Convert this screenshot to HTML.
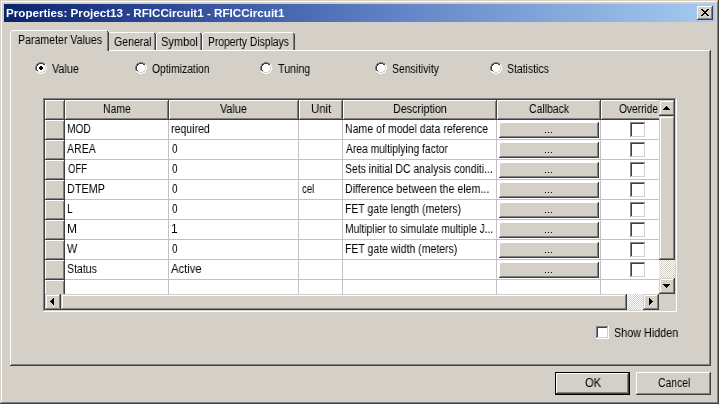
<!DOCTYPE html>
<html><head><meta charset="utf-8"><style>
html,body{margin:0;padding:0;width:719px;height:404px;overflow:hidden;background:#d4d0c8}
body>div,#hdr>div,#gb>div{position:absolute}
.t{position:absolute;font-family:"Liberation Sans",sans-serif;line-height:20px;white-space:nowrap;transform-origin:0 0;will-change:transform}
</style></head><body>
<div style="left:0px;top:0px;width:719px;height:404px;background:#d4d0c8"></div>
<div style="left:0px;top:0px;width:719px;height:1px;background:#d4d0c8"></div>
<div style="left:0px;top:0px;width:1px;height:404px;background:#d4d0c8"></div>
<div style="left:0px;top:403px;width:719px;height:1px;background:#404040"></div>
<div style="left:718px;top:0px;width:1px;height:404px;background:#404040"></div>
<div style="left:1px;top:1px;width:717px;height:1px;background:#ffffff"></div>
<div style="left:1px;top:1px;width:1px;height:402px;background:#ffffff"></div>
<div style="left:1px;top:402px;width:717px;height:1px;background:#808080"></div>
<div style="left:717px;top:1px;width:1px;height:402px;background:#808080"></div>
<div style="left:4px;top:4px;width:711px;height:18px;background:linear-gradient(to right,#0a246a 0%,#203a8a 13.5%,#4a6bb2 41.6%,#6686c8 57.1%,#88aadc 79.6%,#a6caf0 100%)"></div>
<div class="t" style="left:6.00px;top:3px;font-size:11px;font-weight:bold;transform:scaleX(1.0570);color:#fff">Properties: Project13 - RFICCircuit1 - RFICCircuit1</div>
<div style="left:697px;top:6px;width:16px;height:14px;background:#d4d0c8"></div>
<div style="left:697px;top:6px;width:16px;height:1px;background:#ffffff"></div>
<div style="left:697px;top:6px;width:1px;height:14px;background:#ffffff"></div>
<div style="left:697px;top:19px;width:16px;height:1px;background:#404040"></div>
<div style="left:712px;top:6px;width:1px;height:14px;background:#404040"></div>
<div style="left:698px;top:7px;width:14px;height:1px;background:#d4d0c8"></div>
<div style="left:698px;top:7px;width:1px;height:12px;background:#d4d0c8"></div>
<div style="left:698px;top:18px;width:14px;height:1px;background:#808080"></div>
<div style="left:711px;top:7px;width:1px;height:12px;background:#808080"></div>
<svg style="position:absolute;left:697px;top:6px" width="16" height="14" shape-rendering="crispEdges"><path d="M4 3h2v1h1v1h2v-1h1v-1h2v1h-1v1h-1v1h-1v1h1v1h1v1h1v1h-2v-1h-1v-1h-2v1h-1v1h-2v-1h1v-1h1v-1h1v-1h-1v-1h-1v-1h-1z" fill="#000"/></svg>
<div style="left:10px;top:50px;width:701px;height:316px;background:#d4d0c8"></div>
<div style="left:10px;top:50px;width:700px;height:1px;background:#ffffff"></div>
<div style="left:10px;top:50px;width:1px;height:315px;background:#ffffff"></div>
<div style="left:709px;top:51px;width:1px;height:314px;background:#808080"></div>
<div style="left:11px;top:364px;width:699px;height:1px;background:#808080"></div>
<div style="left:710px;top:50px;width:1px;height:316px;background:#404040"></div>
<div style="left:10px;top:365px;width:701px;height:1px;background:#404040"></div>
<div style="left:107px;top:34px;width:1px;height:16px;background:#ffffff"></div>
<div style="left:108px;top:33px;width:1px;height:1px;background:#ffffff"></div>
<div style="left:109px;top:32px;width:45px;height:1px;background:#ffffff"></div>
<div style="left:154px;top:34px;width:1px;height:16px;background:#808080"></div>
<div style="left:154px;top:33px;width:1px;height:1px;background:#404040"></div>
<div style="left:155px;top:34px;width:1px;height:16px;background:#404040"></div>
<div class="t" style="left:114.00px;top:32px;font-size:12px;transform:scaleX(0.8810);color:#000">General</div>
<div style="left:156px;top:34px;width:1px;height:16px;background:#ffffff"></div>
<div style="left:157px;top:33px;width:1px;height:1px;background:#ffffff"></div>
<div style="left:158px;top:32px;width:42px;height:1px;background:#ffffff"></div>
<div style="left:200px;top:34px;width:1px;height:16px;background:#808080"></div>
<div style="left:200px;top:33px;width:1px;height:1px;background:#404040"></div>
<div style="left:201px;top:34px;width:1px;height:16px;background:#404040"></div>
<div class="t" style="left:161.08px;top:32px;font-size:12px;transform:scaleX(0.9211);color:#000">Symbol</div>
<div style="left:202px;top:34px;width:1px;height:16px;background:#ffffff"></div>
<div style="left:203px;top:33px;width:1px;height:1px;background:#ffffff"></div>
<div style="left:204px;top:32px;width:89px;height:1px;background:#ffffff"></div>
<div style="left:293px;top:34px;width:1px;height:16px;background:#808080"></div>
<div style="left:293px;top:33px;width:1px;height:1px;background:#404040"></div>
<div style="left:294px;top:34px;width:1px;height:16px;background:#404040"></div>
<div class="t" style="left:208.14px;top:32px;font-size:12px;transform:scaleX(0.8602);color:#000">Property Displays</div>
<div style="left:11px;top:31px;width:96px;height:21px;background:#d4d0c8"></div>
<div style="left:10px;top:32px;width:1px;height:19px;background:#ffffff"></div>
<div style="left:11px;top:31px;width:1px;height:1px;background:#ffffff"></div>
<div style="left:12px;top:30px;width:95px;height:1px;background:#ffffff"></div>
<div style="left:107px;top:32px;width:1px;height:19px;background:#808080"></div>
<div style="left:107px;top:31px;width:1px;height:1px;background:#404040"></div>
<div style="left:108px;top:32px;width:1px;height:19px;background:#404040"></div>
<div class="t" style="left:18.12px;top:30px;font-size:12px;transform:scaleX(0.8830);color:#000">Parameter Values</div>
<svg style="position:absolute;left:35px;top:62px" width="12" height="12" shape-rendering="crispEdges"><rect x="4" y="0" width="4" height="1" fill="#808080"/><rect x="2" y="1" width="2" height="1" fill="#808080"/><rect x="4" y="1" width="4" height="1" fill="#404040"/><rect x="8" y="1" width="2" height="1" fill="#808080"/><rect x="1" y="2" width="1" height="1" fill="#808080"/><rect x="2" y="2" width="2" height="1" fill="#404040"/><rect x="4" y="2" width="4" height="1" fill="#ffffff"/><rect x="8" y="2" width="2" height="1" fill="#404040"/><rect x="10" y="2" width="1" height="1" fill="#ffffff"/><rect x="1" y="3" width="1" height="1" fill="#808080"/><rect x="2" y="3" width="1" height="1" fill="#404040"/><rect x="3" y="3" width="6" height="1" fill="#ffffff"/><rect x="9" y="3" width="1" height="1" fill="#d4d0c8"/><rect x="10" y="3" width="1" height="1" fill="#ffffff"/><rect x="0" y="4" width="1" height="1" fill="#808080"/><rect x="1" y="4" width="1" height="1" fill="#404040"/><rect x="2" y="4" width="3" height="1" fill="#ffffff"/><rect x="5" y="4" width="2" height="1" fill="#000"/><rect x="7" y="4" width="3" height="1" fill="#ffffff"/><rect x="10" y="4" width="1" height="1" fill="#d4d0c8"/><rect x="11" y="4" width="1" height="1" fill="#ffffff"/><rect x="0" y="5" width="1" height="1" fill="#808080"/><rect x="1" y="5" width="1" height="1" fill="#404040"/><rect x="2" y="5" width="2" height="1" fill="#ffffff"/><rect x="4" y="5" width="4" height="1" fill="#000"/><rect x="8" y="5" width="2" height="1" fill="#ffffff"/><rect x="10" y="5" width="1" height="1" fill="#d4d0c8"/><rect x="11" y="5" width="1" height="1" fill="#ffffff"/><rect x="0" y="6" width="1" height="1" fill="#808080"/><rect x="1" y="6" width="1" height="1" fill="#404040"/><rect x="2" y="6" width="2" height="1" fill="#ffffff"/><rect x="4" y="6" width="4" height="1" fill="#000"/><rect x="8" y="6" width="2" height="1" fill="#ffffff"/><rect x="10" y="6" width="1" height="1" fill="#d4d0c8"/><rect x="11" y="6" width="1" height="1" fill="#ffffff"/><rect x="0" y="7" width="1" height="1" fill="#808080"/><rect x="1" y="7" width="1" height="1" fill="#404040"/><rect x="2" y="7" width="3" height="1" fill="#ffffff"/><rect x="5" y="7" width="2" height="1" fill="#000"/><rect x="7" y="7" width="3" height="1" fill="#ffffff"/><rect x="10" y="7" width="1" height="1" fill="#d4d0c8"/><rect x="11" y="7" width="1" height="1" fill="#ffffff"/><rect x="1" y="8" width="1" height="1" fill="#808080"/><rect x="2" y="8" width="1" height="1" fill="#404040"/><rect x="3" y="8" width="6" height="1" fill="#ffffff"/><rect x="9" y="8" width="1" height="1" fill="#d4d0c8"/><rect x="10" y="8" width="1" height="1" fill="#ffffff"/><rect x="1" y="9" width="1" height="1" fill="#ffffff"/><rect x="2" y="9" width="2" height="1" fill="#d4d0c8"/><rect x="4" y="9" width="4" height="1" fill="#ffffff"/><rect x="8" y="9" width="2" height="1" fill="#d4d0c8"/><rect x="10" y="9" width="1" height="1" fill="#ffffff"/><rect x="2" y="10" width="2" height="1" fill="#ffffff"/><rect x="4" y="10" width="4" height="1" fill="#d4d0c8"/><rect x="8" y="10" width="2" height="1" fill="#ffffff"/><rect x="4" y="11" width="4" height="1" fill="#ffffff"/></svg>
<div class="t" style="left:52.00px;top:59px;font-size:12px;transform:scaleX(0.9000);color:#000">Value</div>
<svg style="position:absolute;left:135px;top:62px" width="12" height="12" shape-rendering="crispEdges"><rect x="4" y="0" width="4" height="1" fill="#808080"/><rect x="2" y="1" width="2" height="1" fill="#808080"/><rect x="4" y="1" width="4" height="1" fill="#404040"/><rect x="8" y="1" width="2" height="1" fill="#808080"/><rect x="1" y="2" width="1" height="1" fill="#808080"/><rect x="2" y="2" width="2" height="1" fill="#404040"/><rect x="4" y="2" width="4" height="1" fill="#ffffff"/><rect x="8" y="2" width="2" height="1" fill="#404040"/><rect x="10" y="2" width="1" height="1" fill="#ffffff"/><rect x="1" y="3" width="1" height="1" fill="#808080"/><rect x="2" y="3" width="1" height="1" fill="#404040"/><rect x="3" y="3" width="6" height="1" fill="#ffffff"/><rect x="9" y="3" width="1" height="1" fill="#d4d0c8"/><rect x="10" y="3" width="1" height="1" fill="#ffffff"/><rect x="0" y="4" width="1" height="1" fill="#808080"/><rect x="1" y="4" width="1" height="1" fill="#404040"/><rect x="2" y="4" width="8" height="1" fill="#ffffff"/><rect x="10" y="4" width="1" height="1" fill="#d4d0c8"/><rect x="11" y="4" width="1" height="1" fill="#ffffff"/><rect x="0" y="5" width="1" height="1" fill="#808080"/><rect x="1" y="5" width="1" height="1" fill="#404040"/><rect x="2" y="5" width="8" height="1" fill="#ffffff"/><rect x="10" y="5" width="1" height="1" fill="#d4d0c8"/><rect x="11" y="5" width="1" height="1" fill="#ffffff"/><rect x="0" y="6" width="1" height="1" fill="#808080"/><rect x="1" y="6" width="1" height="1" fill="#404040"/><rect x="2" y="6" width="8" height="1" fill="#ffffff"/><rect x="10" y="6" width="1" height="1" fill="#d4d0c8"/><rect x="11" y="6" width="1" height="1" fill="#ffffff"/><rect x="0" y="7" width="1" height="1" fill="#808080"/><rect x="1" y="7" width="1" height="1" fill="#404040"/><rect x="2" y="7" width="8" height="1" fill="#ffffff"/><rect x="10" y="7" width="1" height="1" fill="#d4d0c8"/><rect x="11" y="7" width="1" height="1" fill="#ffffff"/><rect x="1" y="8" width="1" height="1" fill="#808080"/><rect x="2" y="8" width="1" height="1" fill="#404040"/><rect x="3" y="8" width="6" height="1" fill="#ffffff"/><rect x="9" y="8" width="1" height="1" fill="#d4d0c8"/><rect x="10" y="8" width="1" height="1" fill="#ffffff"/><rect x="1" y="9" width="1" height="1" fill="#ffffff"/><rect x="2" y="9" width="2" height="1" fill="#d4d0c8"/><rect x="4" y="9" width="4" height="1" fill="#ffffff"/><rect x="8" y="9" width="2" height="1" fill="#d4d0c8"/><rect x="10" y="9" width="1" height="1" fill="#ffffff"/><rect x="2" y="10" width="2" height="1" fill="#ffffff"/><rect x="4" y="10" width="4" height="1" fill="#d4d0c8"/><rect x="8" y="10" width="2" height="1" fill="#ffffff"/><rect x="4" y="11" width="4" height="1" fill="#ffffff"/></svg>
<div class="t" style="left:152.00px;top:59px;font-size:12px;transform:scaleX(0.8636);color:#000">Optimization</div>
<svg style="position:absolute;left:260px;top:62px" width="12" height="12" shape-rendering="crispEdges"><rect x="4" y="0" width="4" height="1" fill="#808080"/><rect x="2" y="1" width="2" height="1" fill="#808080"/><rect x="4" y="1" width="4" height="1" fill="#404040"/><rect x="8" y="1" width="2" height="1" fill="#808080"/><rect x="1" y="2" width="1" height="1" fill="#808080"/><rect x="2" y="2" width="2" height="1" fill="#404040"/><rect x="4" y="2" width="4" height="1" fill="#ffffff"/><rect x="8" y="2" width="2" height="1" fill="#404040"/><rect x="10" y="2" width="1" height="1" fill="#ffffff"/><rect x="1" y="3" width="1" height="1" fill="#808080"/><rect x="2" y="3" width="1" height="1" fill="#404040"/><rect x="3" y="3" width="6" height="1" fill="#ffffff"/><rect x="9" y="3" width="1" height="1" fill="#d4d0c8"/><rect x="10" y="3" width="1" height="1" fill="#ffffff"/><rect x="0" y="4" width="1" height="1" fill="#808080"/><rect x="1" y="4" width="1" height="1" fill="#404040"/><rect x="2" y="4" width="8" height="1" fill="#ffffff"/><rect x="10" y="4" width="1" height="1" fill="#d4d0c8"/><rect x="11" y="4" width="1" height="1" fill="#ffffff"/><rect x="0" y="5" width="1" height="1" fill="#808080"/><rect x="1" y="5" width="1" height="1" fill="#404040"/><rect x="2" y="5" width="8" height="1" fill="#ffffff"/><rect x="10" y="5" width="1" height="1" fill="#d4d0c8"/><rect x="11" y="5" width="1" height="1" fill="#ffffff"/><rect x="0" y="6" width="1" height="1" fill="#808080"/><rect x="1" y="6" width="1" height="1" fill="#404040"/><rect x="2" y="6" width="8" height="1" fill="#ffffff"/><rect x="10" y="6" width="1" height="1" fill="#d4d0c8"/><rect x="11" y="6" width="1" height="1" fill="#ffffff"/><rect x="0" y="7" width="1" height="1" fill="#808080"/><rect x="1" y="7" width="1" height="1" fill="#404040"/><rect x="2" y="7" width="8" height="1" fill="#ffffff"/><rect x="10" y="7" width="1" height="1" fill="#d4d0c8"/><rect x="11" y="7" width="1" height="1" fill="#ffffff"/><rect x="1" y="8" width="1" height="1" fill="#808080"/><rect x="2" y="8" width="1" height="1" fill="#404040"/><rect x="3" y="8" width="6" height="1" fill="#ffffff"/><rect x="9" y="8" width="1" height="1" fill="#d4d0c8"/><rect x="10" y="8" width="1" height="1" fill="#ffffff"/><rect x="1" y="9" width="1" height="1" fill="#ffffff"/><rect x="2" y="9" width="2" height="1" fill="#d4d0c8"/><rect x="4" y="9" width="4" height="1" fill="#ffffff"/><rect x="8" y="9" width="2" height="1" fill="#d4d0c8"/><rect x="10" y="9" width="1" height="1" fill="#ffffff"/><rect x="2" y="10" width="2" height="1" fill="#ffffff"/><rect x="4" y="10" width="4" height="1" fill="#d4d0c8"/><rect x="8" y="10" width="2" height="1" fill="#ffffff"/><rect x="4" y="11" width="4" height="1" fill="#ffffff"/></svg>
<div class="t" style="left:278.00px;top:59px;font-size:12px;transform:scaleX(0.8889);color:#000">Tuning</div>
<svg style="position:absolute;left:375px;top:62px" width="12" height="12" shape-rendering="crispEdges"><rect x="4" y="0" width="4" height="1" fill="#808080"/><rect x="2" y="1" width="2" height="1" fill="#808080"/><rect x="4" y="1" width="4" height="1" fill="#404040"/><rect x="8" y="1" width="2" height="1" fill="#808080"/><rect x="1" y="2" width="1" height="1" fill="#808080"/><rect x="2" y="2" width="2" height="1" fill="#404040"/><rect x="4" y="2" width="4" height="1" fill="#ffffff"/><rect x="8" y="2" width="2" height="1" fill="#404040"/><rect x="10" y="2" width="1" height="1" fill="#ffffff"/><rect x="1" y="3" width="1" height="1" fill="#808080"/><rect x="2" y="3" width="1" height="1" fill="#404040"/><rect x="3" y="3" width="6" height="1" fill="#ffffff"/><rect x="9" y="3" width="1" height="1" fill="#d4d0c8"/><rect x="10" y="3" width="1" height="1" fill="#ffffff"/><rect x="0" y="4" width="1" height="1" fill="#808080"/><rect x="1" y="4" width="1" height="1" fill="#404040"/><rect x="2" y="4" width="8" height="1" fill="#ffffff"/><rect x="10" y="4" width="1" height="1" fill="#d4d0c8"/><rect x="11" y="4" width="1" height="1" fill="#ffffff"/><rect x="0" y="5" width="1" height="1" fill="#808080"/><rect x="1" y="5" width="1" height="1" fill="#404040"/><rect x="2" y="5" width="8" height="1" fill="#ffffff"/><rect x="10" y="5" width="1" height="1" fill="#d4d0c8"/><rect x="11" y="5" width="1" height="1" fill="#ffffff"/><rect x="0" y="6" width="1" height="1" fill="#808080"/><rect x="1" y="6" width="1" height="1" fill="#404040"/><rect x="2" y="6" width="8" height="1" fill="#ffffff"/><rect x="10" y="6" width="1" height="1" fill="#d4d0c8"/><rect x="11" y="6" width="1" height="1" fill="#ffffff"/><rect x="0" y="7" width="1" height="1" fill="#808080"/><rect x="1" y="7" width="1" height="1" fill="#404040"/><rect x="2" y="7" width="8" height="1" fill="#ffffff"/><rect x="10" y="7" width="1" height="1" fill="#d4d0c8"/><rect x="11" y="7" width="1" height="1" fill="#ffffff"/><rect x="1" y="8" width="1" height="1" fill="#808080"/><rect x="2" y="8" width="1" height="1" fill="#404040"/><rect x="3" y="8" width="6" height="1" fill="#ffffff"/><rect x="9" y="8" width="1" height="1" fill="#d4d0c8"/><rect x="10" y="8" width="1" height="1" fill="#ffffff"/><rect x="1" y="9" width="1" height="1" fill="#ffffff"/><rect x="2" y="9" width="2" height="1" fill="#d4d0c8"/><rect x="4" y="9" width="4" height="1" fill="#ffffff"/><rect x="8" y="9" width="2" height="1" fill="#d4d0c8"/><rect x="10" y="9" width="1" height="1" fill="#ffffff"/><rect x="2" y="10" width="2" height="1" fill="#ffffff"/><rect x="4" y="10" width="4" height="1" fill="#d4d0c8"/><rect x="8" y="10" width="2" height="1" fill="#ffffff"/><rect x="4" y="11" width="4" height="1" fill="#ffffff"/></svg>
<div class="t" style="left:392.13px;top:59px;font-size:12px;transform:scaleX(0.8679);color:#000">Sensitivity</div>
<svg style="position:absolute;left:490px;top:62px" width="12" height="12" shape-rendering="crispEdges"><rect x="4" y="0" width="4" height="1" fill="#808080"/><rect x="2" y="1" width="2" height="1" fill="#808080"/><rect x="4" y="1" width="4" height="1" fill="#404040"/><rect x="8" y="1" width="2" height="1" fill="#808080"/><rect x="1" y="2" width="1" height="1" fill="#808080"/><rect x="2" y="2" width="2" height="1" fill="#404040"/><rect x="4" y="2" width="4" height="1" fill="#ffffff"/><rect x="8" y="2" width="2" height="1" fill="#404040"/><rect x="10" y="2" width="1" height="1" fill="#ffffff"/><rect x="1" y="3" width="1" height="1" fill="#808080"/><rect x="2" y="3" width="1" height="1" fill="#404040"/><rect x="3" y="3" width="6" height="1" fill="#ffffff"/><rect x="9" y="3" width="1" height="1" fill="#d4d0c8"/><rect x="10" y="3" width="1" height="1" fill="#ffffff"/><rect x="0" y="4" width="1" height="1" fill="#808080"/><rect x="1" y="4" width="1" height="1" fill="#404040"/><rect x="2" y="4" width="8" height="1" fill="#ffffff"/><rect x="10" y="4" width="1" height="1" fill="#d4d0c8"/><rect x="11" y="4" width="1" height="1" fill="#ffffff"/><rect x="0" y="5" width="1" height="1" fill="#808080"/><rect x="1" y="5" width="1" height="1" fill="#404040"/><rect x="2" y="5" width="8" height="1" fill="#ffffff"/><rect x="10" y="5" width="1" height="1" fill="#d4d0c8"/><rect x="11" y="5" width="1" height="1" fill="#ffffff"/><rect x="0" y="6" width="1" height="1" fill="#808080"/><rect x="1" y="6" width="1" height="1" fill="#404040"/><rect x="2" y="6" width="8" height="1" fill="#ffffff"/><rect x="10" y="6" width="1" height="1" fill="#d4d0c8"/><rect x="11" y="6" width="1" height="1" fill="#ffffff"/><rect x="0" y="7" width="1" height="1" fill="#808080"/><rect x="1" y="7" width="1" height="1" fill="#404040"/><rect x="2" y="7" width="8" height="1" fill="#ffffff"/><rect x="10" y="7" width="1" height="1" fill="#d4d0c8"/><rect x="11" y="7" width="1" height="1" fill="#ffffff"/><rect x="1" y="8" width="1" height="1" fill="#808080"/><rect x="2" y="8" width="1" height="1" fill="#404040"/><rect x="3" y="8" width="6" height="1" fill="#ffffff"/><rect x="9" y="8" width="1" height="1" fill="#d4d0c8"/><rect x="10" y="8" width="1" height="1" fill="#ffffff"/><rect x="1" y="9" width="1" height="1" fill="#ffffff"/><rect x="2" y="9" width="2" height="1" fill="#d4d0c8"/><rect x="4" y="9" width="4" height="1" fill="#ffffff"/><rect x="8" y="9" width="2" height="1" fill="#d4d0c8"/><rect x="10" y="9" width="1" height="1" fill="#ffffff"/><rect x="2" y="10" width="2" height="1" fill="#ffffff"/><rect x="4" y="10" width="4" height="1" fill="#d4d0c8"/><rect x="8" y="10" width="2" height="1" fill="#ffffff"/><rect x="4" y="11" width="4" height="1" fill="#ffffff"/></svg>
<div class="t" style="left:507.13px;top:59px;font-size:12px;transform:scaleX(0.8723);color:#000">Statistics</div>
<div style="left:43px;top:98px;width:634px;height:214px;background:#fff"></div>
<div style="left:43px;top:98px;width:634px;height:1px;background:#808080"></div>
<div style="left:43px;top:98px;width:1px;height:214px;background:#808080"></div>
<div style="left:43px;top:311px;width:634px;height:1px;background:#ffffff"></div>
<div style="left:676px;top:98px;width:1px;height:214px;background:#ffffff"></div>
<div style="left:44px;top:99px;width:632px;height:1px;background:#404040"></div>
<div style="left:44px;top:99px;width:1px;height:212px;background:#404040"></div>
<div style="left:44px;top:310px;width:632px;height:1px;background:#d4d0c8"></div>
<div style="left:675px;top:99px;width:1px;height:212px;background:#d4d0c8"></div>
<div style="left:45px;top:100px;width:20px;height:20px;background:#d4d0c8"></div>
<div style="left:45px;top:100px;width:19px;height:1px;background:#ffffff"></div>
<div style="left:45px;top:100px;width:1px;height:19px;background:#ffffff"></div>
<div style="left:63px;top:101px;width:1px;height:18px;background:#808080"></div>
<div style="left:46px;top:118px;width:18px;height:1px;background:#808080"></div>
<div style="left:64px;top:100px;width:1px;height:20px;background:#404040"></div>
<div style="left:45px;top:119px;width:20px;height:1px;background:#404040"></div>
<div style="left:65px;top:100px;width:104px;height:20px;background:#d4d0c8"></div>
<div style="left:65px;top:100px;width:103px;height:1px;background:#ffffff"></div>
<div style="left:65px;top:100px;width:1px;height:19px;background:#ffffff"></div>
<div style="left:167px;top:101px;width:1px;height:18px;background:#808080"></div>
<div style="left:66px;top:118px;width:102px;height:1px;background:#808080"></div>
<div style="left:168px;top:100px;width:1px;height:20px;background:#404040"></div>
<div style="left:65px;top:119px;width:104px;height:1px;background:#404040"></div>
<div style="left:169px;top:100px;width:130px;height:20px;background:#d4d0c8"></div>
<div style="left:169px;top:100px;width:129px;height:1px;background:#ffffff"></div>
<div style="left:169px;top:100px;width:1px;height:19px;background:#ffffff"></div>
<div style="left:297px;top:101px;width:1px;height:18px;background:#808080"></div>
<div style="left:170px;top:118px;width:128px;height:1px;background:#808080"></div>
<div style="left:298px;top:100px;width:1px;height:20px;background:#404040"></div>
<div style="left:169px;top:119px;width:130px;height:1px;background:#404040"></div>
<div style="left:299px;top:100px;width:44px;height:20px;background:#d4d0c8"></div>
<div style="left:299px;top:100px;width:43px;height:1px;background:#ffffff"></div>
<div style="left:299px;top:100px;width:1px;height:19px;background:#ffffff"></div>
<div style="left:341px;top:101px;width:1px;height:18px;background:#808080"></div>
<div style="left:300px;top:118px;width:42px;height:1px;background:#808080"></div>
<div style="left:342px;top:100px;width:1px;height:20px;background:#404040"></div>
<div style="left:299px;top:119px;width:44px;height:1px;background:#404040"></div>
<div style="left:343px;top:100px;width:154px;height:20px;background:#d4d0c8"></div>
<div style="left:343px;top:100px;width:153px;height:1px;background:#ffffff"></div>
<div style="left:343px;top:100px;width:1px;height:19px;background:#ffffff"></div>
<div style="left:495px;top:101px;width:1px;height:18px;background:#808080"></div>
<div style="left:344px;top:118px;width:152px;height:1px;background:#808080"></div>
<div style="left:496px;top:100px;width:1px;height:20px;background:#404040"></div>
<div style="left:343px;top:119px;width:154px;height:1px;background:#404040"></div>
<div style="left:497px;top:100px;width:104px;height:20px;background:#d4d0c8"></div>
<div style="left:497px;top:100px;width:103px;height:1px;background:#ffffff"></div>
<div style="left:497px;top:100px;width:1px;height:19px;background:#ffffff"></div>
<div style="left:599px;top:101px;width:1px;height:18px;background:#808080"></div>
<div style="left:498px;top:118px;width:102px;height:1px;background:#808080"></div>
<div style="left:600px;top:100px;width:1px;height:20px;background:#404040"></div>
<div style="left:497px;top:119px;width:104px;height:1px;background:#404040"></div>
<div style="left:601px;top:100px;width:74px;height:20px;background:#d4d0c8"></div>
<div style="left:601px;top:100px;width:73px;height:1px;background:#ffffff"></div>
<div style="left:601px;top:100px;width:1px;height:19px;background:#ffffff"></div>
<div style="left:673px;top:101px;width:1px;height:18px;background:#808080"></div>
<div style="left:602px;top:118px;width:72px;height:1px;background:#808080"></div>
<div style="left:674px;top:100px;width:1px;height:20px;background:#404040"></div>
<div style="left:601px;top:119px;width:74px;height:1px;background:#404040"></div>
<div id="hdr" style="left:45px;top:100px;width:614px;height:20px;overflow:hidden">
<div class="t" style="left:58.13px;top:-1px;font-size:12px;transform:scaleX(0.8710);color:#000">Name</div>
<div class="t" style="left:175.00px;top:-1px;font-size:12px;transform:scaleX(0.9000);color:#000">Value</div>
<div class="t" style="left:266.05px;top:-1px;font-size:12px;transform:scaleX(0.9500);color:#000">Unit</div>
<div class="t" style="left:348.10px;top:-1px;font-size:12px;transform:scaleX(0.8966);color:#000">Description</div>
<div class="t" style="left:484.00px;top:-1px;font-size:12px;transform:scaleX(0.8696);color:#000">Callback</div>
<div class="t" style="left:574.00px;top:-1px;font-size:12px;transform:scaleX(0.8478);color:#000">Override</div>
</div>
<div id="gb" style="left:45px;top:120px;width:614px;height:174px;overflow:hidden">
<div style="left:0px;top:0px;width:20px;height:20px;background:#d4d0c8"></div>
<div style="left:0px;top:0px;width:19px;height:1px;background:#ffffff"></div>
<div style="left:0px;top:0px;width:1px;height:19px;background:#ffffff"></div>
<div style="left:18px;top:1px;width:1px;height:18px;background:#808080"></div>
<div style="left:1px;top:18px;width:18px;height:1px;background:#808080"></div>
<div style="left:19px;top:0px;width:1px;height:20px;background:#404040"></div>
<div style="left:0px;top:19px;width:20px;height:1px;background:#404040"></div>
<div style="left:20px;top:19px;width:610px;height:1px;background:#c4c0c8"></div>
<div style="left:123px;top:0px;width:1px;height:20px;background:#c4c0c8"></div>
<div style="left:253px;top:0px;width:1px;height:20px;background:#c4c0c8"></div>
<div style="left:297px;top:0px;width:1px;height:20px;background:#c4c0c8"></div>
<div style="left:451px;top:0px;width:1px;height:20px;background:#c4c0c8"></div>
<div style="left:555px;top:0px;width:1px;height:20px;background:#c4c0c8"></div>
<div style="left:629px;top:0px;width:1px;height:20px;background:#c4c0c8"></div>
<div class="t" style="left:22.15px;top:-1px;font-size:12px;transform:scaleX(0.8519);color:#000">MOD</div>
<div class="t" style="left:126.12px;top:-1px;font-size:12px;transform:scaleX(0.8810);color:#000">required</div>
<div class="t" style="left:300.12px;top:-1px;font-size:12px;transform:scaleX(0.8820);color:#000">Name of model data reference</div>
<div style="left:454px;top:2px;width:100px;height:16px;background:#d4d0c8"></div>
<div style="left:454px;top:2px;width:100px;height:1px;background:#ffffff"></div>
<div style="left:454px;top:2px;width:1px;height:16px;background:#ffffff"></div>
<div style="left:454px;top:17px;width:100px;height:1px;background:#404040"></div>
<div style="left:553px;top:2px;width:1px;height:16px;background:#404040"></div>
<div style="left:455px;top:3px;width:98px;height:1px;background:#d4d0c8"></div>
<div style="left:455px;top:3px;width:1px;height:14px;background:#d4d0c8"></div>
<div style="left:455px;top:16px;width:98px;height:1px;background:#808080"></div>
<div style="left:552px;top:3px;width:1px;height:14px;background:#808080"></div>
<div style="left:500px;top:12px;width:1px;height:1px;background:#000"></div>
<div style="left:503px;top:12px;width:1px;height:1px;background:#000"></div>
<div style="left:506px;top:12px;width:1px;height:1px;background:#000"></div>
<div style="left:585px;top:2px;width:16px;height:16px;background:#ffffff"></div>
<div style="left:585px;top:2px;width:15px;height:1px;background:#808080"></div>
<div style="left:585px;top:2px;width:1px;height:15px;background:#808080"></div>
<div style="left:586px;top:3px;width:13px;height:1px;background:#404040"></div>
<div style="left:586px;top:3px;width:1px;height:13px;background:#404040"></div>
<div style="left:599px;top:3px;width:1px;height:14px;background:#d4d0c8"></div>
<div style="left:586px;top:16px;width:14px;height:1px;background:#d4d0c8"></div>
<div style="left:0px;top:20px;width:20px;height:20px;background:#d4d0c8"></div>
<div style="left:0px;top:20px;width:19px;height:1px;background:#ffffff"></div>
<div style="left:0px;top:20px;width:1px;height:19px;background:#ffffff"></div>
<div style="left:18px;top:21px;width:1px;height:18px;background:#808080"></div>
<div style="left:1px;top:38px;width:18px;height:1px;background:#808080"></div>
<div style="left:19px;top:20px;width:1px;height:20px;background:#404040"></div>
<div style="left:0px;top:39px;width:20px;height:1px;background:#404040"></div>
<div style="left:20px;top:39px;width:610px;height:1px;background:#c4c0c8"></div>
<div style="left:123px;top:20px;width:1px;height:20px;background:#c4c0c8"></div>
<div style="left:253px;top:20px;width:1px;height:20px;background:#c4c0c8"></div>
<div style="left:297px;top:20px;width:1px;height:20px;background:#c4c0c8"></div>
<div style="left:451px;top:20px;width:1px;height:20px;background:#c4c0c8"></div>
<div style="left:555px;top:20px;width:1px;height:20px;background:#c4c0c8"></div>
<div style="left:629px;top:20px;width:1px;height:20px;background:#c4c0c8"></div>
<div class="t" style="left:22.00px;top:19px;font-size:12px;transform:scaleX(0.8788);color:#000">AREA</div>
<div class="t" style="left:127.00px;top:19px;font-size:12px;transform:scaleX(0.8333);color:#000">0</div>
<div class="t" style="left:301.00px;top:19px;font-size:12px;transform:scaleX(0.8571);color:#000">Area multiplying factor</div>
<div style="left:454px;top:22px;width:100px;height:16px;background:#d4d0c8"></div>
<div style="left:454px;top:22px;width:100px;height:1px;background:#ffffff"></div>
<div style="left:454px;top:22px;width:1px;height:16px;background:#ffffff"></div>
<div style="left:454px;top:37px;width:100px;height:1px;background:#404040"></div>
<div style="left:553px;top:22px;width:1px;height:16px;background:#404040"></div>
<div style="left:455px;top:23px;width:98px;height:1px;background:#d4d0c8"></div>
<div style="left:455px;top:23px;width:1px;height:14px;background:#d4d0c8"></div>
<div style="left:455px;top:36px;width:98px;height:1px;background:#808080"></div>
<div style="left:552px;top:23px;width:1px;height:14px;background:#808080"></div>
<div style="left:500px;top:32px;width:1px;height:1px;background:#000"></div>
<div style="left:503px;top:32px;width:1px;height:1px;background:#000"></div>
<div style="left:506px;top:32px;width:1px;height:1px;background:#000"></div>
<div style="left:585px;top:22px;width:16px;height:16px;background:#ffffff"></div>
<div style="left:585px;top:22px;width:15px;height:1px;background:#808080"></div>
<div style="left:585px;top:22px;width:1px;height:15px;background:#808080"></div>
<div style="left:586px;top:23px;width:13px;height:1px;background:#404040"></div>
<div style="left:586px;top:23px;width:1px;height:13px;background:#404040"></div>
<div style="left:599px;top:23px;width:1px;height:14px;background:#d4d0c8"></div>
<div style="left:586px;top:36px;width:14px;height:1px;background:#d4d0c8"></div>
<div style="left:0px;top:40px;width:20px;height:20px;background:#d4d0c8"></div>
<div style="left:0px;top:40px;width:19px;height:1px;background:#ffffff"></div>
<div style="left:0px;top:40px;width:1px;height:19px;background:#ffffff"></div>
<div style="left:18px;top:41px;width:1px;height:18px;background:#808080"></div>
<div style="left:1px;top:58px;width:18px;height:1px;background:#808080"></div>
<div style="left:19px;top:40px;width:1px;height:20px;background:#404040"></div>
<div style="left:0px;top:59px;width:20px;height:1px;background:#404040"></div>
<div style="left:20px;top:59px;width:610px;height:1px;background:#c4c0c8"></div>
<div style="left:123px;top:40px;width:1px;height:20px;background:#c4c0c8"></div>
<div style="left:253px;top:40px;width:1px;height:20px;background:#c4c0c8"></div>
<div style="left:297px;top:40px;width:1px;height:20px;background:#c4c0c8"></div>
<div style="left:451px;top:40px;width:1px;height:20px;background:#c4c0c8"></div>
<div style="left:555px;top:40px;width:1px;height:20px;background:#c4c0c8"></div>
<div style="left:629px;top:40px;width:1px;height:20px;background:#c4c0c8"></div>
<div class="t" style="left:23.00px;top:39px;font-size:12px;transform:scaleX(0.7917);color:#000">OFF</div>
<div class="t" style="left:127.00px;top:39px;font-size:12px;transform:scaleX(0.8333);color:#000">0</div>
<div class="t" style="left:300.13px;top:39px;font-size:12px;transform:scaleX(0.8690);color:#000">Sets initial DC analysis conditi...</div>
<div style="left:454px;top:42px;width:100px;height:16px;background:#d4d0c8"></div>
<div style="left:454px;top:42px;width:100px;height:1px;background:#ffffff"></div>
<div style="left:454px;top:42px;width:1px;height:16px;background:#ffffff"></div>
<div style="left:454px;top:57px;width:100px;height:1px;background:#404040"></div>
<div style="left:553px;top:42px;width:1px;height:16px;background:#404040"></div>
<div style="left:455px;top:43px;width:98px;height:1px;background:#d4d0c8"></div>
<div style="left:455px;top:43px;width:1px;height:14px;background:#d4d0c8"></div>
<div style="left:455px;top:56px;width:98px;height:1px;background:#808080"></div>
<div style="left:552px;top:43px;width:1px;height:14px;background:#808080"></div>
<div style="left:500px;top:52px;width:1px;height:1px;background:#000"></div>
<div style="left:503px;top:52px;width:1px;height:1px;background:#000"></div>
<div style="left:506px;top:52px;width:1px;height:1px;background:#000"></div>
<div style="left:585px;top:42px;width:16px;height:16px;background:#ffffff"></div>
<div style="left:585px;top:42px;width:15px;height:1px;background:#808080"></div>
<div style="left:585px;top:42px;width:1px;height:15px;background:#808080"></div>
<div style="left:586px;top:43px;width:13px;height:1px;background:#404040"></div>
<div style="left:586px;top:43px;width:1px;height:13px;background:#404040"></div>
<div style="left:599px;top:43px;width:1px;height:14px;background:#d4d0c8"></div>
<div style="left:586px;top:56px;width:14px;height:1px;background:#d4d0c8"></div>
<div style="left:0px;top:60px;width:20px;height:20px;background:#d4d0c8"></div>
<div style="left:0px;top:60px;width:19px;height:1px;background:#ffffff"></div>
<div style="left:0px;top:60px;width:1px;height:19px;background:#ffffff"></div>
<div style="left:18px;top:61px;width:1px;height:18px;background:#808080"></div>
<div style="left:1px;top:78px;width:18px;height:1px;background:#808080"></div>
<div style="left:19px;top:60px;width:1px;height:20px;background:#404040"></div>
<div style="left:0px;top:79px;width:20px;height:1px;background:#404040"></div>
<div style="left:20px;top:79px;width:610px;height:1px;background:#c4c0c8"></div>
<div style="left:123px;top:60px;width:1px;height:20px;background:#c4c0c8"></div>
<div style="left:253px;top:60px;width:1px;height:20px;background:#c4c0c8"></div>
<div style="left:297px;top:60px;width:1px;height:20px;background:#c4c0c8"></div>
<div style="left:451px;top:60px;width:1px;height:20px;background:#c4c0c8"></div>
<div style="left:555px;top:60px;width:1px;height:20px;background:#c4c0c8"></div>
<div style="left:629px;top:60px;width:1px;height:20px;background:#c4c0c8"></div>
<div class="t" style="left:22.10px;top:59px;font-size:12px;transform:scaleX(0.9024);color:#000">DTEMP</div>
<div class="t" style="left:127.00px;top:59px;font-size:12px;transform:scaleX(0.8333);color:#000">0</div>
<div class="t" style="left:257.00px;top:59px;font-size:12px;transform:scaleX(0.8000);color:#000">cel</div>
<div class="t" style="left:300.11px;top:59px;font-size:12px;transform:scaleX(0.8882);color:#000">Difference between the elem...</div>
<div style="left:454px;top:62px;width:100px;height:16px;background:#d4d0c8"></div>
<div style="left:454px;top:62px;width:100px;height:1px;background:#ffffff"></div>
<div style="left:454px;top:62px;width:1px;height:16px;background:#ffffff"></div>
<div style="left:454px;top:77px;width:100px;height:1px;background:#404040"></div>
<div style="left:553px;top:62px;width:1px;height:16px;background:#404040"></div>
<div style="left:455px;top:63px;width:98px;height:1px;background:#d4d0c8"></div>
<div style="left:455px;top:63px;width:1px;height:14px;background:#d4d0c8"></div>
<div style="left:455px;top:76px;width:98px;height:1px;background:#808080"></div>
<div style="left:552px;top:63px;width:1px;height:14px;background:#808080"></div>
<div style="left:500px;top:72px;width:1px;height:1px;background:#000"></div>
<div style="left:503px;top:72px;width:1px;height:1px;background:#000"></div>
<div style="left:506px;top:72px;width:1px;height:1px;background:#000"></div>
<div style="left:585px;top:62px;width:16px;height:16px;background:#ffffff"></div>
<div style="left:585px;top:62px;width:15px;height:1px;background:#808080"></div>
<div style="left:585px;top:62px;width:1px;height:15px;background:#808080"></div>
<div style="left:586px;top:63px;width:13px;height:1px;background:#404040"></div>
<div style="left:586px;top:63px;width:1px;height:13px;background:#404040"></div>
<div style="left:599px;top:63px;width:1px;height:14px;background:#d4d0c8"></div>
<div style="left:586px;top:76px;width:14px;height:1px;background:#d4d0c8"></div>
<div style="left:0px;top:80px;width:20px;height:20px;background:#d4d0c8"></div>
<div style="left:0px;top:80px;width:19px;height:1px;background:#ffffff"></div>
<div style="left:0px;top:80px;width:1px;height:19px;background:#ffffff"></div>
<div style="left:18px;top:81px;width:1px;height:18px;background:#808080"></div>
<div style="left:1px;top:98px;width:18px;height:1px;background:#808080"></div>
<div style="left:19px;top:80px;width:1px;height:20px;background:#404040"></div>
<div style="left:0px;top:99px;width:20px;height:1px;background:#404040"></div>
<div style="left:20px;top:99px;width:610px;height:1px;background:#c4c0c8"></div>
<div style="left:123px;top:80px;width:1px;height:20px;background:#c4c0c8"></div>
<div style="left:253px;top:80px;width:1px;height:20px;background:#c4c0c8"></div>
<div style="left:297px;top:80px;width:1px;height:20px;background:#c4c0c8"></div>
<div style="left:451px;top:80px;width:1px;height:20px;background:#c4c0c8"></div>
<div style="left:555px;top:80px;width:1px;height:20px;background:#c4c0c8"></div>
<div style="left:629px;top:80px;width:1px;height:20px;background:#c4c0c8"></div>
<div class="t" style="left:22.17px;top:79px;font-size:12px;transform:scaleX(0.8333);color:#000">L</div>
<div class="t" style="left:127.00px;top:79px;font-size:12px;transform:scaleX(0.8333);color:#000">0</div>
<div class="t" style="left:300.13px;top:79px;font-size:12px;transform:scaleX(0.8712);color:#000">FET gate length (meters)</div>
<div style="left:454px;top:82px;width:100px;height:16px;background:#d4d0c8"></div>
<div style="left:454px;top:82px;width:100px;height:1px;background:#ffffff"></div>
<div style="left:454px;top:82px;width:1px;height:16px;background:#ffffff"></div>
<div style="left:454px;top:97px;width:100px;height:1px;background:#404040"></div>
<div style="left:553px;top:82px;width:1px;height:16px;background:#404040"></div>
<div style="left:455px;top:83px;width:98px;height:1px;background:#d4d0c8"></div>
<div style="left:455px;top:83px;width:1px;height:14px;background:#d4d0c8"></div>
<div style="left:455px;top:96px;width:98px;height:1px;background:#808080"></div>
<div style="left:552px;top:83px;width:1px;height:14px;background:#808080"></div>
<div style="left:500px;top:92px;width:1px;height:1px;background:#000"></div>
<div style="left:503px;top:92px;width:1px;height:1px;background:#000"></div>
<div style="left:506px;top:92px;width:1px;height:1px;background:#000"></div>
<div style="left:585px;top:82px;width:16px;height:16px;background:#ffffff"></div>
<div style="left:585px;top:82px;width:15px;height:1px;background:#808080"></div>
<div style="left:585px;top:82px;width:1px;height:15px;background:#808080"></div>
<div style="left:586px;top:83px;width:13px;height:1px;background:#404040"></div>
<div style="left:586px;top:83px;width:1px;height:13px;background:#404040"></div>
<div style="left:599px;top:83px;width:1px;height:14px;background:#d4d0c8"></div>
<div style="left:586px;top:96px;width:14px;height:1px;background:#d4d0c8"></div>
<div style="left:0px;top:100px;width:20px;height:20px;background:#d4d0c8"></div>
<div style="left:0px;top:100px;width:19px;height:1px;background:#ffffff"></div>
<div style="left:0px;top:100px;width:1px;height:19px;background:#ffffff"></div>
<div style="left:18px;top:101px;width:1px;height:18px;background:#808080"></div>
<div style="left:1px;top:118px;width:18px;height:1px;background:#808080"></div>
<div style="left:19px;top:100px;width:1px;height:20px;background:#404040"></div>
<div style="left:0px;top:119px;width:20px;height:1px;background:#404040"></div>
<div style="left:20px;top:119px;width:610px;height:1px;background:#c4c0c8"></div>
<div style="left:123px;top:100px;width:1px;height:20px;background:#c4c0c8"></div>
<div style="left:253px;top:100px;width:1px;height:20px;background:#c4c0c8"></div>
<div style="left:297px;top:100px;width:1px;height:20px;background:#c4c0c8"></div>
<div style="left:451px;top:100px;width:1px;height:20px;background:#c4c0c8"></div>
<div style="left:555px;top:100px;width:1px;height:20px;background:#c4c0c8"></div>
<div style="left:629px;top:100px;width:1px;height:20px;background:#c4c0c8"></div>
<div class="t" style="left:22.00px;top:99px;font-size:12px;transform:scaleX(1.0000);color:#000">M</div>
<div class="t" style="left:126.00px;top:99px;font-size:12px;transform:scaleX(1.0000);color:#000">1</div>
<div class="t" style="left:300.15px;top:99px;font-size:12px;transform:scaleX(0.8547);color:#000">Multiplier to simulate multiple J...</div>
<div style="left:454px;top:102px;width:100px;height:16px;background:#d4d0c8"></div>
<div style="left:454px;top:102px;width:100px;height:1px;background:#ffffff"></div>
<div style="left:454px;top:102px;width:1px;height:16px;background:#ffffff"></div>
<div style="left:454px;top:117px;width:100px;height:1px;background:#404040"></div>
<div style="left:553px;top:102px;width:1px;height:16px;background:#404040"></div>
<div style="left:455px;top:103px;width:98px;height:1px;background:#d4d0c8"></div>
<div style="left:455px;top:103px;width:1px;height:14px;background:#d4d0c8"></div>
<div style="left:455px;top:116px;width:98px;height:1px;background:#808080"></div>
<div style="left:552px;top:103px;width:1px;height:14px;background:#808080"></div>
<div style="left:500px;top:112px;width:1px;height:1px;background:#000"></div>
<div style="left:503px;top:112px;width:1px;height:1px;background:#000"></div>
<div style="left:506px;top:112px;width:1px;height:1px;background:#000"></div>
<div style="left:585px;top:102px;width:16px;height:16px;background:#ffffff"></div>
<div style="left:585px;top:102px;width:15px;height:1px;background:#808080"></div>
<div style="left:585px;top:102px;width:1px;height:15px;background:#808080"></div>
<div style="left:586px;top:103px;width:13px;height:1px;background:#404040"></div>
<div style="left:586px;top:103px;width:1px;height:13px;background:#404040"></div>
<div style="left:599px;top:103px;width:1px;height:14px;background:#d4d0c8"></div>
<div style="left:586px;top:116px;width:14px;height:1px;background:#d4d0c8"></div>
<div style="left:0px;top:120px;width:20px;height:20px;background:#d4d0c8"></div>
<div style="left:0px;top:120px;width:19px;height:1px;background:#ffffff"></div>
<div style="left:0px;top:120px;width:1px;height:19px;background:#ffffff"></div>
<div style="left:18px;top:121px;width:1px;height:18px;background:#808080"></div>
<div style="left:1px;top:138px;width:18px;height:1px;background:#808080"></div>
<div style="left:19px;top:120px;width:1px;height:20px;background:#404040"></div>
<div style="left:0px;top:139px;width:20px;height:1px;background:#404040"></div>
<div style="left:20px;top:139px;width:610px;height:1px;background:#c4c0c8"></div>
<div style="left:123px;top:120px;width:1px;height:20px;background:#c4c0c8"></div>
<div style="left:253px;top:120px;width:1px;height:20px;background:#c4c0c8"></div>
<div style="left:297px;top:120px;width:1px;height:20px;background:#c4c0c8"></div>
<div style="left:451px;top:120px;width:1px;height:20px;background:#c4c0c8"></div>
<div style="left:555px;top:120px;width:1px;height:20px;background:#c4c0c8"></div>
<div style="left:629px;top:120px;width:1px;height:20px;background:#c4c0c8"></div>
<div class="t" style="left:22.00px;top:119px;font-size:12px;transform:scaleX(0.9091);color:#000">W</div>
<div class="t" style="left:127.00px;top:119px;font-size:12px;transform:scaleX(0.8333);color:#000">0</div>
<div class="t" style="left:300.13px;top:119px;font-size:12px;transform:scaleX(0.8740);color:#000">FET gate width (meters)</div>
<div style="left:454px;top:122px;width:100px;height:16px;background:#d4d0c8"></div>
<div style="left:454px;top:122px;width:100px;height:1px;background:#ffffff"></div>
<div style="left:454px;top:122px;width:1px;height:16px;background:#ffffff"></div>
<div style="left:454px;top:137px;width:100px;height:1px;background:#404040"></div>
<div style="left:553px;top:122px;width:1px;height:16px;background:#404040"></div>
<div style="left:455px;top:123px;width:98px;height:1px;background:#d4d0c8"></div>
<div style="left:455px;top:123px;width:1px;height:14px;background:#d4d0c8"></div>
<div style="left:455px;top:136px;width:98px;height:1px;background:#808080"></div>
<div style="left:552px;top:123px;width:1px;height:14px;background:#808080"></div>
<div style="left:500px;top:132px;width:1px;height:1px;background:#000"></div>
<div style="left:503px;top:132px;width:1px;height:1px;background:#000"></div>
<div style="left:506px;top:132px;width:1px;height:1px;background:#000"></div>
<div style="left:585px;top:122px;width:16px;height:16px;background:#ffffff"></div>
<div style="left:585px;top:122px;width:15px;height:1px;background:#808080"></div>
<div style="left:585px;top:122px;width:1px;height:15px;background:#808080"></div>
<div style="left:586px;top:123px;width:13px;height:1px;background:#404040"></div>
<div style="left:586px;top:123px;width:1px;height:13px;background:#404040"></div>
<div style="left:599px;top:123px;width:1px;height:14px;background:#d4d0c8"></div>
<div style="left:586px;top:136px;width:14px;height:1px;background:#d4d0c8"></div>
<div style="left:0px;top:140px;width:20px;height:20px;background:#d4d0c8"></div>
<div style="left:0px;top:140px;width:19px;height:1px;background:#ffffff"></div>
<div style="left:0px;top:140px;width:1px;height:19px;background:#ffffff"></div>
<div style="left:18px;top:141px;width:1px;height:18px;background:#808080"></div>
<div style="left:1px;top:158px;width:18px;height:1px;background:#808080"></div>
<div style="left:19px;top:140px;width:1px;height:20px;background:#404040"></div>
<div style="left:0px;top:159px;width:20px;height:1px;background:#404040"></div>
<div style="left:20px;top:159px;width:610px;height:1px;background:#c4c0c8"></div>
<div style="left:123px;top:140px;width:1px;height:20px;background:#c4c0c8"></div>
<div style="left:253px;top:140px;width:1px;height:20px;background:#c4c0c8"></div>
<div style="left:297px;top:140px;width:1px;height:20px;background:#c4c0c8"></div>
<div style="left:451px;top:140px;width:1px;height:20px;background:#c4c0c8"></div>
<div style="left:555px;top:140px;width:1px;height:20px;background:#c4c0c8"></div>
<div style="left:629px;top:140px;width:1px;height:20px;background:#c4c0c8"></div>
<div class="t" style="left:22.12px;top:139px;font-size:12px;transform:scaleX(0.8788);color:#000">Status</div>
<div class="t" style="left:126.00px;top:139px;font-size:12px;transform:scaleX(0.9375);color:#000">Active</div>
<div style="left:454px;top:142px;width:100px;height:16px;background:#d4d0c8"></div>
<div style="left:454px;top:142px;width:100px;height:1px;background:#ffffff"></div>
<div style="left:454px;top:142px;width:1px;height:16px;background:#ffffff"></div>
<div style="left:454px;top:157px;width:100px;height:1px;background:#404040"></div>
<div style="left:553px;top:142px;width:1px;height:16px;background:#404040"></div>
<div style="left:455px;top:143px;width:98px;height:1px;background:#d4d0c8"></div>
<div style="left:455px;top:143px;width:1px;height:14px;background:#d4d0c8"></div>
<div style="left:455px;top:156px;width:98px;height:1px;background:#808080"></div>
<div style="left:552px;top:143px;width:1px;height:14px;background:#808080"></div>
<div style="left:500px;top:152px;width:1px;height:1px;background:#000"></div>
<div style="left:503px;top:152px;width:1px;height:1px;background:#000"></div>
<div style="left:506px;top:152px;width:1px;height:1px;background:#000"></div>
<div style="left:585px;top:142px;width:16px;height:16px;background:#ffffff"></div>
<div style="left:585px;top:142px;width:15px;height:1px;background:#808080"></div>
<div style="left:585px;top:142px;width:1px;height:15px;background:#808080"></div>
<div style="left:586px;top:143px;width:13px;height:1px;background:#404040"></div>
<div style="left:586px;top:143px;width:1px;height:13px;background:#404040"></div>
<div style="left:599px;top:143px;width:1px;height:14px;background:#d4d0c8"></div>
<div style="left:586px;top:156px;width:14px;height:1px;background:#d4d0c8"></div>
<div style="left:0px;top:160px;width:20px;height:20px;background:#d4d0c8"></div>
<div style="left:0px;top:160px;width:19px;height:1px;background:#ffffff"></div>
<div style="left:0px;top:160px;width:1px;height:19px;background:#ffffff"></div>
<div style="left:18px;top:161px;width:1px;height:18px;background:#808080"></div>
<div style="left:1px;top:178px;width:18px;height:1px;background:#808080"></div>
<div style="left:19px;top:160px;width:1px;height:20px;background:#404040"></div>
<div style="left:0px;top:179px;width:20px;height:1px;background:#404040"></div>
<div style="left:20px;top:179px;width:610px;height:1px;background:#c4c0c8"></div>
<div style="left:123px;top:160px;width:1px;height:20px;background:#c4c0c8"></div>
<div style="left:253px;top:160px;width:1px;height:20px;background:#c4c0c8"></div>
<div style="left:297px;top:160px;width:1px;height:20px;background:#c4c0c8"></div>
<div style="left:451px;top:160px;width:1px;height:20px;background:#c4c0c8"></div>
<div style="left:555px;top:160px;width:1px;height:20px;background:#c4c0c8"></div>
<div style="left:629px;top:160px;width:1px;height:20px;background:#c4c0c8"></div>
</div>
<div style="left:659px;top:100px;width:16px;height:194px;background:repeating-conic-gradient(#d4d0c8 0 25%,#fff 0 50%) 0 0/2px 2px"></div>
<div style="left:659px;top:100px;width:16px;height:16px;background:#d4d0c8"></div>
<div style="left:659px;top:100px;width:16px;height:1px;background:#d4d0c8"></div>
<div style="left:659px;top:100px;width:1px;height:16px;background:#d4d0c8"></div>
<div style="left:659px;top:115px;width:16px;height:1px;background:#404040"></div>
<div style="left:674px;top:100px;width:1px;height:16px;background:#404040"></div>
<div style="left:660px;top:101px;width:14px;height:1px;background:#ffffff"></div>
<div style="left:660px;top:101px;width:1px;height:14px;background:#ffffff"></div>
<div style="left:660px;top:114px;width:14px;height:1px;background:#808080"></div>
<div style="left:673px;top:101px;width:1px;height:14px;background:#808080"></div>
<svg style="position:absolute;left:659px;top:100px" width="16" height="16" shape-rendering="crispEdges"><path d="M7 6h1v1h1v1h1v1h1v1h-7v-1h1v-1h1v-1h1z" fill="#000"/></svg>
<div style="left:659px;top:116px;width:16px;height:144px;background:#d4d0c8"></div>
<div style="left:659px;top:116px;width:16px;height:1px;background:#d4d0c8"></div>
<div style="left:659px;top:116px;width:1px;height:144px;background:#d4d0c8"></div>
<div style="left:659px;top:259px;width:16px;height:1px;background:#404040"></div>
<div style="left:674px;top:116px;width:1px;height:144px;background:#404040"></div>
<div style="left:660px;top:117px;width:14px;height:1px;background:#ffffff"></div>
<div style="left:660px;top:117px;width:1px;height:142px;background:#ffffff"></div>
<div style="left:660px;top:258px;width:14px;height:1px;background:#808080"></div>
<div style="left:673px;top:117px;width:1px;height:142px;background:#808080"></div>
<div style="left:659px;top:278px;width:16px;height:16px;background:#d4d0c8"></div>
<div style="left:659px;top:278px;width:16px;height:1px;background:#d4d0c8"></div>
<div style="left:659px;top:278px;width:1px;height:16px;background:#d4d0c8"></div>
<div style="left:659px;top:293px;width:16px;height:1px;background:#404040"></div>
<div style="left:674px;top:278px;width:1px;height:16px;background:#404040"></div>
<div style="left:660px;top:279px;width:14px;height:1px;background:#ffffff"></div>
<div style="left:660px;top:279px;width:1px;height:14px;background:#ffffff"></div>
<div style="left:660px;top:292px;width:14px;height:1px;background:#808080"></div>
<div style="left:673px;top:279px;width:1px;height:14px;background:#808080"></div>
<svg style="position:absolute;left:659px;top:278px" width="16" height="16" shape-rendering="crispEdges"><path d="M4 6h7v1h-1v1h-1v1h-1v1h-1v-1h-1v-1h-1v-1h-1z" fill="#000"/></svg>
<div style="left:659px;top:294px;width:16px;height:16px;background:#d4d0c8"></div>
<div style="left:45px;top:294px;width:614px;height:16px;background:repeating-conic-gradient(#d4d0c8 0 25%,#fff 0 50%) 1px 0/2px 2px"></div>
<div style="left:45px;top:294px;width:16px;height:16px;background:#d4d0c8"></div>
<div style="left:45px;top:294px;width:16px;height:1px;background:#d4d0c8"></div>
<div style="left:45px;top:294px;width:1px;height:16px;background:#d4d0c8"></div>
<div style="left:45px;top:309px;width:16px;height:1px;background:#404040"></div>
<div style="left:60px;top:294px;width:1px;height:16px;background:#404040"></div>
<div style="left:46px;top:295px;width:14px;height:1px;background:#ffffff"></div>
<div style="left:46px;top:295px;width:1px;height:14px;background:#ffffff"></div>
<div style="left:46px;top:308px;width:14px;height:1px;background:#808080"></div>
<div style="left:59px;top:295px;width:1px;height:14px;background:#808080"></div>
<svg style="position:absolute;left:45px;top:294px" width="16" height="16" shape-rendering="crispEdges"><path d="M8 4h1v7h-1v-1h-1v-1h-1v-1h-1v-1h1v-1h1v-1h1z" fill="#000"/></svg>
<div style="left:61px;top:294px;width:566px;height:16px;background:#d4d0c8"></div>
<div style="left:61px;top:294px;width:566px;height:1px;background:#d4d0c8"></div>
<div style="left:61px;top:294px;width:1px;height:16px;background:#d4d0c8"></div>
<div style="left:61px;top:309px;width:566px;height:1px;background:#404040"></div>
<div style="left:626px;top:294px;width:1px;height:16px;background:#404040"></div>
<div style="left:62px;top:295px;width:564px;height:1px;background:#ffffff"></div>
<div style="left:62px;top:295px;width:1px;height:14px;background:#ffffff"></div>
<div style="left:62px;top:308px;width:564px;height:1px;background:#808080"></div>
<div style="left:625px;top:295px;width:1px;height:14px;background:#808080"></div>
<div style="left:643px;top:294px;width:16px;height:16px;background:#d4d0c8"></div>
<div style="left:643px;top:294px;width:16px;height:1px;background:#d4d0c8"></div>
<div style="left:643px;top:294px;width:1px;height:16px;background:#d4d0c8"></div>
<div style="left:643px;top:309px;width:16px;height:1px;background:#404040"></div>
<div style="left:658px;top:294px;width:1px;height:16px;background:#404040"></div>
<div style="left:644px;top:295px;width:14px;height:1px;background:#ffffff"></div>
<div style="left:644px;top:295px;width:1px;height:14px;background:#ffffff"></div>
<div style="left:644px;top:308px;width:14px;height:1px;background:#808080"></div>
<div style="left:657px;top:295px;width:1px;height:14px;background:#808080"></div>
<svg style="position:absolute;left:643px;top:294px" width="16" height="16" shape-rendering="crispEdges"><path d="M6 4h1v1h1v1h1v1h1v1h-1v1h-1v1h-1v1h-1z" fill="#000"/></svg>
<div style="left:596px;top:326px;width:13px;height:13px;background:#ffffff"></div>
<div style="left:596px;top:326px;width:13px;height:1px;background:#808080"></div>
<div style="left:596px;top:326px;width:1px;height:13px;background:#808080"></div>
<div style="left:596px;top:338px;width:13px;height:1px;background:#ffffff"></div>
<div style="left:608px;top:326px;width:1px;height:13px;background:#ffffff"></div>
<div style="left:597px;top:327px;width:11px;height:1px;background:#404040"></div>
<div style="left:597px;top:327px;width:1px;height:11px;background:#404040"></div>
<div style="left:597px;top:337px;width:11px;height:1px;background:#d4d0c8"></div>
<div style="left:607px;top:327px;width:1px;height:11px;background:#d4d0c8"></div>
<div class="t" style="left:614.10px;top:323px;font-size:12px;transform:scaleX(0.9000);color:#000">Show Hidden</div>
<div style="left:555px;top:372px;width:75px;height:23px;background:#d4d0c8"></div>
<div style="left:555px;top:372px;width:75px;height:1px;background:#000"></div>
<div style="left:555px;top:372px;width:1px;height:23px;background:#000"></div>
<div style="left:555px;top:394px;width:75px;height:1px;background:#000"></div>
<div style="left:629px;top:372px;width:1px;height:23px;background:#000"></div>
<div style="left:556px;top:373px;width:73px;height:21px;background:#d4d0c8"></div>
<div style="left:556px;top:373px;width:73px;height:1px;background:#ffffff"></div>
<div style="left:556px;top:373px;width:1px;height:21px;background:#ffffff"></div>
<div style="left:556px;top:393px;width:73px;height:1px;background:#404040"></div>
<div style="left:628px;top:373px;width:1px;height:21px;background:#404040"></div>
<div style="left:557px;top:374px;width:71px;height:1px;background:#d4d0c8"></div>
<div style="left:557px;top:374px;width:1px;height:19px;background:#d4d0c8"></div>
<div style="left:557px;top:392px;width:71px;height:1px;background:#808080"></div>
<div style="left:627px;top:374px;width:1px;height:19px;background:#808080"></div>
<div class="t" style="left:585.00px;top:373px;font-size:12px;transform:scaleX(0.9412);color:#000">OK</div>
<div style="left:636px;top:372px;width:75px;height:23px;background:#d4d0c8"></div>
<div style="left:636px;top:372px;width:75px;height:1px;background:#ffffff"></div>
<div style="left:636px;top:372px;width:1px;height:23px;background:#ffffff"></div>
<div style="left:636px;top:394px;width:75px;height:1px;background:#404040"></div>
<div style="left:710px;top:372px;width:1px;height:23px;background:#404040"></div>
<div style="left:637px;top:373px;width:73px;height:1px;background:#d4d0c8"></div>
<div style="left:637px;top:373px;width:1px;height:21px;background:#d4d0c8"></div>
<div style="left:637px;top:393px;width:73px;height:1px;background:#808080"></div>
<div style="left:709px;top:373px;width:1px;height:21px;background:#808080"></div>
<div class="t" style="left:658.00px;top:373px;font-size:12px;transform:scaleX(0.8649);color:#000">Cancel</div>
</body></html>
